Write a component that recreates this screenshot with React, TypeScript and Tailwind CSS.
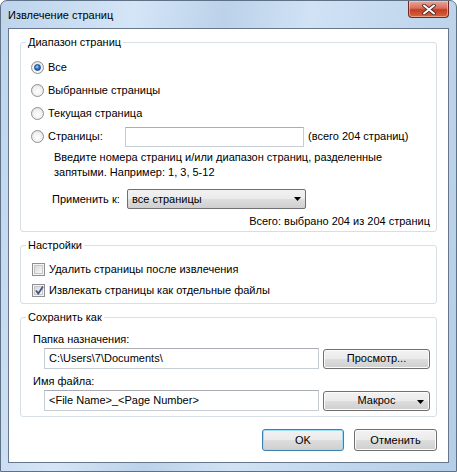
import React from "react";

const font = { fontFamily: '"Liberation Sans", Arial, sans-serif' };

function Radio({ checked }: { checked?: boolean }) {
  return (
    <span className="relative flex w-[13px] h-[13px] shrink-0 items-center justify-center rounded-full border border-[#8f9092] bg-[radial-gradient(circle_at_50%_60%,#ffffff_0%,#f0f0f0_55%,#cfd0d2_100%)]">
      {checked && (
        <span className="w-[7px] h-[7px] rounded-full bg-[radial-gradient(circle_at_40%_35%,#9fd4ff_0%,#2a7ed6_45%,#0d3f8f_100%)] border border-[#17428a]" />
      )}
    </span>
  );
}

function Check({ checked }: { checked?: boolean }) {
  return (
    <span className="relative flex w-[13px] h-[13px] shrink-0 items-center justify-center border border-[#8f8f8f] bg-[#f4f4f4]">
      <span className="w-[9px] h-[9px] border border-[#c6c6c6] bg-[linear-gradient(135deg,#d8d8d8,#f8f8f8)]" />
      {checked && (
        <svg className="absolute left-[1px] top-[0px]" width="11" height="11" viewBox="0 0 11 11">
          <path d="M2 5.5 L4.3 8.5 L9 1.5" fill="none" stroke="#3d4f8a" strokeWidth="1.7" />
        </svg>
      )}
    </span>
  );
}

const btnBg =
  "bg-[linear-gradient(#f2f2f2_0%,#ebebeb_48%,#dddddd_52%,#cfcfcf_100%)]";

function Arrow() {
  return (
    <svg width="7" height="4" viewBox="0 0 7 4">
      <path d="M0 0 H7 L3.5 4 Z" fill="#000" />
    </svg>
  );
}

function Group({ title, className, children }: { title: string; className?: string; children: React.ReactNode }) {
  return (
    <div className={"relative rounded-[3px] border border-[#d5dfe5] " + (className || "")}>
      <span className="absolute -top-[9px] left-[5px] bg-white px-[2px] leading-[16px] text-black">{title}</span>
      {children}
    </div>
  );
}

export default function App() {
  return (
    <div
      className="relative w-[457px] h-[472px] overflow-hidden whitespace-nowrap rounded-t-[7px] border border-[#5e7187] bg-[linear-gradient(100deg,#bdd4ec_0%,#d4e5f6_25%,#bcd2ea_42%,#d0e2f4_58%,#c0d6ed_80%,#b5cde7_100%)] text-[11px] text-black"
      style={font}
    >
      <div className="flex h-[27px] items-center pl-[7px] pt-[2px] text-[11px] text-black">Извлечение страниц</div>

      <div className="absolute top-[0px] right-[7px] flex w-[41px] h-[17px] items-center justify-center rounded-b-[4px] border border-t-0 border-[#6d2a24] bg-[linear-gradient(#e9a99c_0%,#d86d5a_45%,#c33d23_55%,#d9653e_100%)] shadow-[inset_0_0_0_1px_rgba(255,220,210,0.5)]">
        <svg width="14" height="11" viewBox="0 0 14 11">
          <path d="M2 1.5 L12 9.5 M12 1.5 L2 9.5" stroke="#4a2a26" strokeWidth="3.6" strokeLinecap="round" />
          <path d="M2 1.5 L12 9.5 M12 1.5 L2 9.5" stroke="#ffffff" strokeWidth="2" strokeLinecap="round" />
        </svg>
      </div>

      <div className="mx-[7px] h-[435px] border border-[#67768a] bg-white px-[11px] pt-[13px]">
        <Group title="Диапазон страниц" className="pl-[10px] pr-[6px] pt-[13px] pb-[2px]">
          <div className="flex h-[23px] items-center gap-[4px]">
            <Radio checked />
            <span>Все</span>
          </div>
          <div className="flex h-[23px] items-center gap-[4px]">
            <Radio />
            <span>Выбранные страницы</span>
          </div>
          <div className="flex h-[23px] items-center gap-[4px]">
            <Radio />
            <span>Текущая страница</span>
          </div>
          <div className="flex h-[23px] items-center gap-[4px]">
            <Radio />
            <span className="w-[73px]">Страницы:</span>
            <span className="h-[20px] w-[179px] border border-[#c7cdd4] border-t-[#abadb3] bg-white" />
            <span>(всего 204 страниц)</span>
          </div>
          <div className="mt-[2px] pl-[23px] leading-[15px]">
            <div>Введите номера страниц и/или диапазон страниц, разделенные</div>
            <div>запятыми. Например: 1, 3, 5-12</div>
          </div>
          <div className="mt-[9px] flex h-[20px] items-center pl-[21px]">
            <span className="w-[75px]">Применить к:</span>
            <div className={"flex h-[20px] w-[179px] items-center justify-between rounded-[2px] border border-[#707070] pl-[4px] pr-[4px] " + btnBg}>
              <span>все страницы</span>
              <Arrow />
            </div>
          </div>
          <div className="mt-[5px] text-right leading-[15px]">Всего: выбрано 204 из 204 страниц</div>
        </Group>

        <Group title="Настройки" className="mt-[13px] pl-[11px] pt-[13px] pb-[2px]">
          <div className="flex h-[21px] items-center gap-[4px]">
            <Check />
            <span>Удалить страницы после извлечения</span>
          </div>
          <div className="flex h-[21px] items-center gap-[4px]">
            <Check checked />
            <span>Извлекать страницы как отдельные файлы</span>
          </div>
        </Group>

        <Group title="Сохранить как" className="mt-[13px] pl-[12px] pr-[6px] pt-[13px] pb-[5px]">
          <div className="leading-[16px]">Папка назначения:</div>
          <div className="mt-[1px] flex h-[21px] items-center gap-[4px] pl-[11px]">
            <div className="flex h-[21px] flex-1 items-center border border-[#c7cdd4] border-t-[#abadb3] bg-white pl-[4px]">C:\Users\7\Documents\</div>
            <div className={"flex h-[20px] w-[107px] items-center justify-center rounded-[3px] border border-[#707070] shadow-[inset_0_0_0_1px_#fbfbfb] " + btnBg}>Просмотр...</div>
          </div>
          <div className="mt-[4px] leading-[16px]">Имя файла:</div>
          <div className="mt-[1px] flex h-[21px] items-center gap-[4px] pl-[11px]">
            <div className="flex h-[21px] flex-1 items-center border border-[#c7cdd4] border-t-[#abadb3] bg-white pl-[4px]">&lt;File Name&gt;_&lt;Page Number&gt;</div>
            <div className={"relative flex h-[20px] w-[107px] items-center justify-center rounded-[3px] border border-[#707070] shadow-[inset_0_0_0_1px_#fbfbfb] " + btnBg}>
              <span>Макрос</span>
              <span className="absolute right-[5px] top-[8px] flex"><Arrow /></span>
            </div>
          </div>
        </Group>

        <div className="mt-[12px] flex justify-end gap-[10px]">
          <div className={"flex h-[22px] w-[82px] items-center justify-center rounded-[3px] border border-[#3c7fb1] shadow-[inset_0_0_0_1px_#9fdcf6] " + btnBg}>OK</div>
          <div className={"flex h-[22px] w-[83px] items-center justify-center rounded-[3px] border border-[#707070] shadow-[inset_0_0_0_1px_#fbfbfb] " + btnBg}>Отменить</div>
        </div>
      </div>
    </div>
  );
}
